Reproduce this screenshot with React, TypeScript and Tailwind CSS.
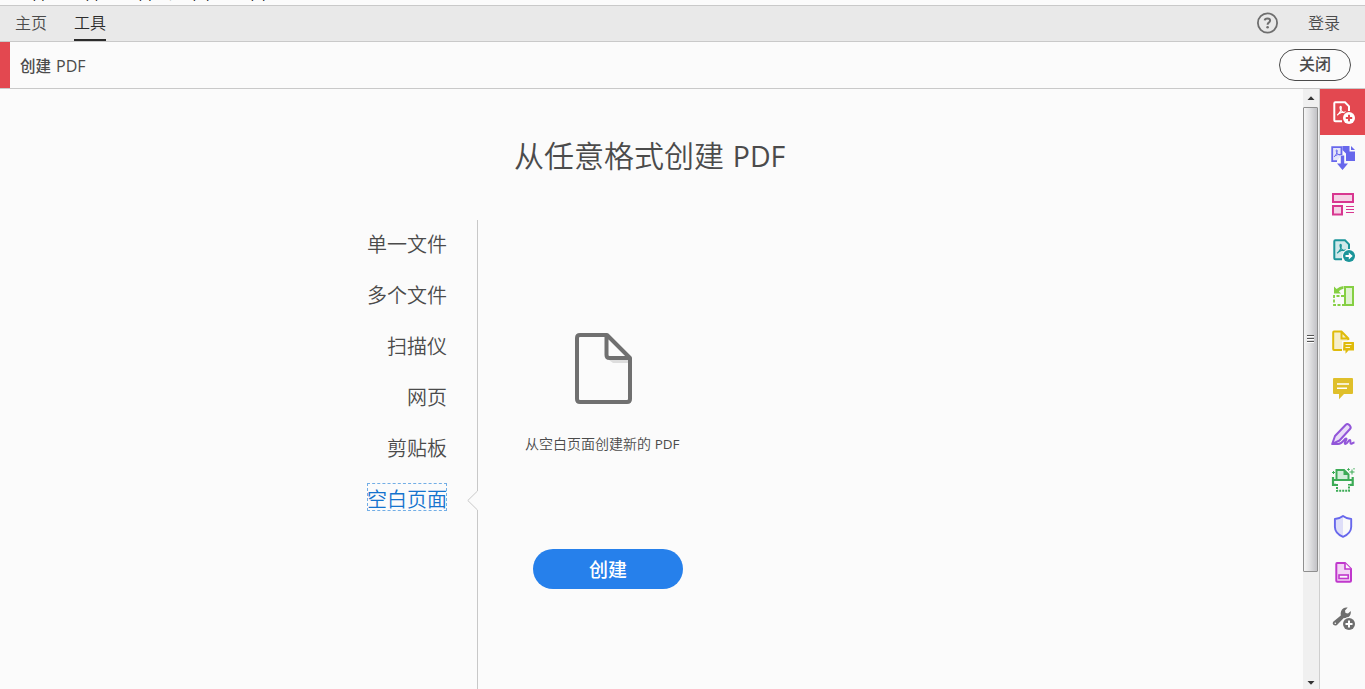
import React from "react";

const formats = ["单一文件", "多个文件", "扫描仪", "网页", "剪贴板"];

const acrobat = "M.2 9C2.5 7 4.3 3.8 4.3 1.2C4.3 -.4 3 -.4 3 1.2C3 3.8 5.4 6.6 8.8 6.8M1.3 7.6Q4.5 5.5 9 5.7";

function Tool({ children, active = false }: { children: React.ReactNode; active?: boolean }) {
  return (
    <button className={active ? "h-[46px] w-[45px] shrink-0 bg-[#e34850]" : "h-[46px] w-[45px] shrink-0"}>
      <svg width="45" height="46" viewBox="0 0 45 46" fill="none">{children}</svg>
    </button>
  );
}

function Sidebar() {
  return (
    <nav className="flex w-[45px] shrink-0 flex-col bg-[#fafafa]">
      <Tool active>
        <path d="M22 32.3H15.3Q14.3 32.3 14.3 31.3V14.3Q14.3 13.3 15.3 13.3H25L29 17.3V22" stroke="#fff" strokeWidth="2" />
        <path d={acrobat} transform="translate(17 17.3)" stroke="#fff" strokeWidth="1.2" />
        <circle cx="29" cy="29" r="7" fill="#e34850" />
        <circle cx="29" cy="29" r="6" fill="#fff" />
        <path d="M29 25.8V32.2M25.8 29H32.2" stroke="#e34850" strokeWidth="2" />
      </Tool>
      <Tool>
        <path d="M17 26.2H12.2V12.2H21.5V20" fill="#e5e5fa" stroke="#6767ec" strokeWidth="1.8" />
        <path d={acrobat} transform="translate(13.8 14.8) scale(.8)" stroke="#6767ec" strokeWidth="1.2" />
        <path d="M22.5 11H29.5V16.5H35V26H26V18.5L22.5 15Z" fill="#6767ec" />
        <path d="M31 11L35 15H31Z" fill="#6767ec" />
        <path d="M20.8 20.5H24.2V28.5H28L22.5 35L17 28.5H20.8Z" fill="#6767ec" stroke="#fafafa" strokeWidth="1" paintOrder="stroke" />
      </Tool>
      <Tool>
        <g stroke="#d83790" strokeWidth="2">
          <rect x="13" y="13" width="20" height="8" fill="#f5d3e6" />
          <rect x="13" y="25" width="9" height="8.5" fill="#f5d3e6" />
          <path d="M26 25.5H34M26 28.5H34M26 31.5H34" strokeWidth="1.1" />
        </g>
      </Tool>
      <Tool>
        <path d="M22 32.2H15.3Q14.3 32.2 14.3 31.2V14.3Q14.3 13.3 15.3 13.3H25L29 17.3V22L23 27Z" fill="#d0e9ea" />
        <path d="M22 32.2H15.3Q14.3 32.2 14.3 31.2V14.3Q14.3 13.3 15.3 13.3H25L29 17.3V22" stroke="#1b959a" strokeWidth="2" />
        <path d={acrobat} transform="translate(17 17.3)" stroke="#1b959a" strokeWidth="1.2" />
        <circle cx="29" cy="29" r="7" fill="#fafafa" />
        <circle cx="29" cy="29" r="6" fill="#1b959a" />
        <path d="M25.5 28H28.8V25.5L32.7 29L28.8 32.5V30H25.5Z" fill="#fff" />
      </Tool>
      <Tool>
        <rect x="25" y="14" width="8" height="18" fill="#e0f3d1" stroke="#85cf43" strokeWidth="2" />
        <path d="M24 23H14V32H24" stroke="#85cf43" strokeWidth="1.8" strokeDasharray="3 1.5" />
        <path d="M14 13.5V20.5H21L18.8 18.3Q20.5 16.3 23.5 15.7V13Q19.3 13.4 16.6 16.1Z" fill="#85cf43" />
      </Tool>
      <Tool>
        <path d="M22 31H14Q13.2 31 13.2 30V13.5Q13.2 12.6 14 12.6H22L28.3 19V22H22Z" fill="#f6efcb" />
        <path d="M22 31H14Q13.2 31 13.2 30V13.5Q13.2 12.6 14 12.6H21.5L28.3 19.5V21M21.5 13V19.5H28" stroke="#dfbb0b" strokeWidth="2" />
        <path d="M23.5 23H33.5Q34 23 34 23.5V31.5H28.5L25.5 34.8V31.5H23Z" fill="#dfbb0b" />
        <path d="M25.5 25.5H31.5M25.5 28.5H30" stroke="#fff7cf" strokeWidth="1.1" />
      </Tool>
      <Tool>
        <path d="M14 13H32Q33 13 33 14V28Q33 29 32 29H24L19 34.3V29H14Q13 29 13 28V14Q13 13 14 13Z" fill="#dfbf2a" />
        <path d="M17 19H29M17 23.3H27" stroke="#fff" strokeWidth="1.6" />
      </Tool>
      <Tool>
        <path d="M12.2 33L15 25L25.8 13.7Q27.3 12.4 29 13.8L30 14.8Q31.4 16.5 30 18L19.5 29.5Z" fill="#e9dcf7" stroke="#9256d9" strokeWidth="2" strokeLinejoin="round" />
        <path d="M12 33H18C23 33 24 27.5 26 27.5C28 27.5 23 33 25.5 33C27.5 33 28.5 28.5 30 29C31.2 29.4 29.5 32.5 31 32.7C32 32.9 32.5 31.6 34.5 31.5" stroke="#9256d9" strokeWidth="2" />
      </Tool>
      <Tool>
        <path d="M16.5 22V13H24L28.5 17.5V22" fill="#d2edda" stroke="#3cab56" strokeWidth="2" />
        <path d="M23.5 12.5V18H29Z" fill="#3cab56" />
        <path d="M13 20V27.8H16M32.7 20V27.8H30M13 23H33" stroke="#3cab56" strokeWidth="2.2" />
        <path d="M17 27V33.8H29V27" stroke="#3cab56" strokeWidth="2" strokeDasharray="2 1" />
        <path d="M13.5 14V17M12 15.5H15M28.5 11.2V13.7M27.2 12.5H29.8M32 12.5V17.5M29.5 15H34.5M34 11V12.5" stroke="#3cab56" strokeWidth="1" />
      </Tool>
      <Tool>
        <path d="M23 13Q27 16 31.2 16V24Q31 30.5 23 33.8Q15 30.5 14.9 24V16Q19 16 23 13Z" fill="#fafafa" />
        <path d="M23 13Q19 16 14.9 16V24Q15 30.5 23 33.8Z" fill="#dedef8" />
        <path d="M23 13Q27 16 31.2 16V24Q31 30.5 23 33.8Q15 30.5 14.9 24V16Q19 16 23 13Z" stroke="#6767ec" strokeWidth="1.9" strokeLinejoin="round" />
      </Tool>
      <Tool>
        <path d="M17 14H25L31 20V31.7Q31 32.7 30 32.7H17.3Q16.3 32.7 16.3 31.7V15Q16.3 14 17 14Z" fill="#f3d6f5" stroke="#c038cc" strokeWidth="2" />
        <path d="M25 14V20H31" fill="#fafafa" stroke="#c038cc" strokeWidth="1.6" />
        <rect x="19" y="26" width="9.2" height="3.5" fill="#fafafa" stroke="#c038cc" strokeWidth="1.6" />
      </Tool>
      <Tool>
        <path d="M13.2 26.8L20.8 20.5Q20 15.5 23.5 13.2Q25.5 12 27.7 12.6L25 15.5L25.5 18L28 18.5L30.8 16Q31.2 20 28.5 22Q26.5 23.5 23.8 23L17 30Q15 31.2 13.3 29.7Q12 28.3 13.2 26.8Z" fill="#6e6e6e" />
        <circle cx="15.3" cy="28.2" r=".8" fill="#fafafa" />
        <circle cx="29" cy="29" r="7" fill="#fafafa" />
        <circle cx="29" cy="29" r="6" fill="#6e6e6e" />
        <path d="M29 25.5V32.5M25.5 29H32.5" stroke="#fff" strokeWidth="2" />
      </Tool>
    </nav>
  );
}

function Scrollbar() {
  return (
    <div className="flex w-[17px] shrink-0 flex-col border-r border-[#cfcfcf] bg-[#f0f0f0]">
      <svg className="h-[18px] w-4 shrink-0" viewBox="0 0 16 18"><path d="M4.5 11L8 7.2L11.5 11Z" fill="#333" /></svg>
      <div className="flex h-[465px] w-[15px] shrink-0 items-center justify-center rounded-[1px] border border-[#8f8f8f] bg-linear-to-r from-[#f5f5f5] via-[#dedee0] to-[#c2c2c6]">
        <svg width="7" height="9" viewBox="0 0 7 9"><path d="M0 .5H7M0 3.5H7M0 6.5H7" stroke="#555" /><path d="M0 1.5H7M0 4.5H7M0 7.5H7" stroke="#fff" /></svg>
      </div>
      <div className="grow" />
      <svg className="h-[14px] w-4 shrink-0" viewBox="0 0 16 14"><path d="M4.5 6L8 9.8L11.5 6Z" fill="#333" /></svg>
    </div>
  );
}

export default function App() {
  return (
    <div className="flex h-[689px] w-[1365px] flex-col overflow-hidden bg-[#fbfbfb] font-['Open_Sans','Noto_Sans_CJK_SC',sans-serif] text-[#4b4b4b]">
      <div className="flex h-[5px] shrink-0 items-end overflow-hidden pb-[2px] pl-2 text-xs leading-[16px] text-black">
        <span className="w-[53px]">文件(F)</span><span className="w-[53px]">编辑(E)</span><span className="w-[54px]">视图(V)</span><span className="w-[58px]">窗口(W)</span><span>帮助(H)</span>
      </div>
      <header className="flex h-[37px] shrink-0 items-stretch border-y border-[#c9c9c9] bg-[#e9e9e9] pl-[15px] text-base leading-[35px] font-[350]">
        <span>主页</span>
        <span className="ml-[27px] h-[35px] border-b-2 border-[#2c2c2c] text-[#2c2c2c]">工具</span>
        <div className="grow" />
        <svg className="mt-[6px] mr-[-1px] h-[22px] w-[22px]" viewBox="0 0 22 22" fill="none">
          <circle cx="10.5" cy="11" r="9.6" stroke="#6e6e6e" strokeWidth="1.8" />
          <path d="M7.7 8.3Q7.9 6.4 10.5 6.4Q13.1 6.4 13.1 8.5Q13.1 9.7 11.8 10.6Q10.6 11.4 10.6 12.7" stroke="#6e6e6e" strokeWidth="2" />
          <circle cx="10.6" cy="15.2" r="1.3" fill="#6e6e6e" />
        </svg>
        <span className="mr-[25px] ml-[30px]">登录</span>
      </header>
      <div className="flex h-[47px] shrink-0 items-center border-b border-[#c9c9c9]">
        <div className="h-full w-[10px] bg-[#e34850]" />
        <h1 className="ml-[10px] pt-[2px] text-[15.5px] font-medium">创建 <span className="ml-px text-base">PDF</span></h1>
        <button className="mr-[14px] ml-auto h-8 w-[72px] rounded-full border border-[#4b4b4b] text-base leading-[28px] font-medium"><span className="block h-[30px]">关闭</span></button>
      </div>
      <div className="flex min-h-0 grow">
        <main className="flex w-[1303px] shrink-0 flex-col">
          <h2 className="mt-[45px] mb-[42px] pl-[514px] text-[30px] leading-[44px] font-[350]">从任意格式创建 <span className="ml-px text-[28.5px] font-normal">PDF</span></h2>
          <div className="flex min-h-0 grow">
            <ul className="flex w-[447px] flex-col items-end pt-[11px] text-xl leading-[28px] font-[350]">
              {formats.map((name) => <li key={name} className="mb-[23px]">{name}</li>)}
              <li className="mt-[-3px] flex h-7 w-20 justify-center border border-dashed border-[#72aee6] leading-[32px] whitespace-nowrap text-[#1473ce]">空白页面</li>
            </ul>
            <svg className="ml-5 h-[469px] w-3 shrink-0" viewBox="0 0 12 469" fill="none"><path d="M10.5 0V271L.8 280.5L10.5 290V469" stroke="#c8c8c8" /></svg>
            <section className="pl-[46px]">
              <svg className="mt-[112px] ml-[50px] h-[73px] w-[59px]" viewBox="0 0 59 73" fill="none">
                <path d="M34 28H54V31H38Z" fill="#dedede" />
                <path d="M5 3H32L55 26V67Q55 70 52 70H5Q2 70 2 67V6Q2 3 5 3ZM31.5 3V23Q31.5 26 34.5 26H55" stroke="#707070" strokeWidth="4" strokeLinejoin="round" />
              </svg>
              <p className="mt-[29px] text-sm leading-[20px] font-[350]">从空白页面创建新的 <span className="text-[13.5px] font-normal">PDF</span></p>
              <button className="mt-[95px] ml-[8px] block h-10 w-[150px] rounded-full bg-[#2680eb] text-[19px] leading-[42px] font-medium text-white"><span className="block h-10">创建</span></button>
            </section>
          </div>
        </main>
        <Scrollbar />
        <Sidebar />
      </div>
    </div>
  );
}
